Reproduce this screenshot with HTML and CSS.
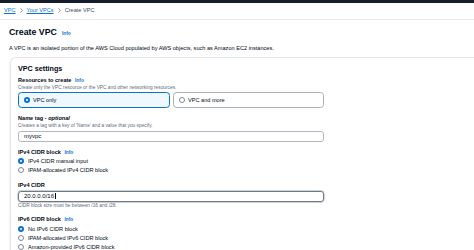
FILE: index.html
```html
<!DOCTYPE html>
<html lang="en">
<head>
<meta charset="utf-8">
<title>Create VPC</title>
<link rel="stylesheet" href="styles.css">
</head>
<body>
<div class="topnav"></div>
<nav class="crumbs">
  <a class="crumb-link" href="#">VPC</a>
  <svg class="chev" viewBox="0 0 3 5" width="3" height="5"><path d="M0.6 0.4 L2.4 2.5 L0.6 4.6" fill="none" stroke="#5f6b7a" stroke-width="0.7"/></svg>
  <a class="crumb-link" href="#">Your VPCs</a>
  <svg class="chev" viewBox="0 0 3 5" width="3" height="5"><path d="M0.6 0.4 L2.4 2.5 L0.6 4.6" fill="none" stroke="#5f6b7a" stroke-width="0.7"/></svg>
  <span class="crumb-current">Create VPC</span>
</nav>
<main class="page">
  <h1 class="title">Create VPC <a class="info" href="#">Info</a></h1>
  <p class="lead">A VPC is an isolated portion of the AWS Cloud populated by AWS objects, such as Amazon EC2 instances.</p>
  <section class="card">
    <h2 class="card-title">VPC settings</h2>

    <div class="field field-first">
      <div class="label">Resources to create <a class="info" href="#">Info</a></div>
      <div class="desc">Create only the VPC resource or the VPC and other networking resources.</div>
      <div class="tiles">
        <div class="tile tile-on"><span class="radio radio-on"></span>VPC only</div>
        <div class="tile"><span class="radio"></span>VPC and more</div>
      </div>
    </div>

    <div class="field">
      <div class="label">Name tag - <i>optional</i></div>
      <div class="desc">Creates a tag with a key of 'Name' and a value that you specify.</div>
      <div class="input">myvpc</div>
    </div>

    <div class="field">
      <div class="label">IPv4 CIDR block <a class="info" href="#">Info</a></div>
      <div class="radios">
        <div class="opt"><span class="radio radio-on"></span>IPv4 CIDR manual input</div>
        <div class="opt"><span class="radio"></span>IPAM-allocated IPv4 CIDR block</div>
      </div>
    </div>

    <div class="field">
      <div class="label">IPv4 CIDR</div>
      <div class="input input-focus">20.0.0.0/16<span class="caret"></span></div>
      <div class="hint">CIDR block size must be between /16 and /28.</div>
    </div>

    <div class="field">
      <div class="label">IPv6 CIDR block <a class="info" href="#">Info</a></div>
      <div class="radios">
        <div class="opt"><span class="radio radio-on"></span>No IPv6 CIDR block</div>
        <div class="opt"><span class="radio"></span>IPAM-allocated IPv6 CIDR block</div>
        <div class="opt"><span class="radio"></span>Amazon-provided IPv6 CIDR block</div>
      </div>
    </div>
  </section>
</main>
</body>
</html>
```

FILE: styles.css
```css
* {
  box-sizing: border-box;
  margin: 0;
  padding: 0;
}

html, body {
  width: 474px;
  height: 250px;
  overflow: hidden;
  background: #ffffff;
}

body {
  font-family: "Liberation Sans", Arial, sans-serif;
  color: #000716;
  font-size: 5.6px;
}

.topnav {
  height: 3px;
  background: #161d2a;
}

.crumbs {
  height: 17px;
  padding: 0 0 2px 4px;
  display: flex;
  align-items: center;
  border-bottom: 1px solid #e9ebed;
  font-size: 5.6px;
}

.crumb-link {
  color: #0972d3;
  text-decoration: underline;
  text-decoration-thickness: 0.5px;
  text-underline-offset: 1px;
}

.chev {
  margin: 0 4px 0 4px;
  display: block;
}

.crumb-current {
  color: #414d5c;
}

.page {
  padding-left: 9px;
}

.title {
  margin-top: 6px;
  font-size: 8.8px;
  line-height: 12px;
  font-weight: 700;
  display: flex;
  align-items: baseline;
  gap: 5px;
}

.info {
  font-size: 4.8px;
  font-weight: 700;
  color: #0972d3;
  text-decoration: none;
}

.label .info {
  margin-left: 2px;
}

.lead {
  margin-top: 4px;
  font-size: 5.6px;
  line-height: 8px;
}

.card {
  margin-top: 5px;
  margin-left: 1px;
  width: 464px;
  height: 195px;
  border: 1px solid #e4e6e9;
  border-right: none;
  border-bottom: none;
  border-radius: 6px 0 0 0;
  box-shadow: -1px 1px 2px rgba(0, 7, 22, 0.06);
  padding: 6px 0 0 7px;
}

.card-title {
  font-size: 7.2px;
  line-height: 9px;
  font-weight: 700;
}

.field {
  width: 306px;
  margin-top: 7px;
}

.field-first {
  margin-top: 3.5px;
}

.label {
  font-size: 5.6px;
  line-height: 7px;
  font-weight: 700;
}

.desc {
  margin-top: 1px;
  font-size: 4.8px;
  line-height: 6px;
  color: #5f6b7a;
}

.tiles {
  margin-top: 1.5px;
  display: grid;
  grid-template-columns: 152px 151px;
  gap: 3px;
}

.tile {
  height: 16px;
  display: flex;
  align-items: center;
  gap: 3px;
  padding-left: 5px;
  border: 1px solid #a9b0b8;
  border-radius: 3.5px;
  font-size: 5.6px;
}

.tile-on {
  border-color: #0972d3;
  background: #f0f8ff;
}

.radio {
  width: 6px;
  height: 6px;
  flex: none;
  border-radius: 50%;
  border: 0.8px solid #7d8998;
  background: #ffffff;
}

.radio-on {
  border: 2px solid #0972d3;
}

.input {
  margin-top: 1.5px;
  height: 11px;
  display: flex;
  align-items: center;
  padding-left: 5px;
  border: 1px solid #b3b8bf;
  border-radius: 3px;
  font-size: 6px;
}

.input-focus {
  margin-top: 2px;
  border-color: #6f7989;
  box-shadow: 0 0 0 0.4px #9aa4b2;
}

.caret {
  display: inline-block;
  width: 0.6px;
  height: 6px;
  margin-left: 1px;
  background: #000716;
}

.hint {
  margin-top: 1.5px;
  font-size: 4.8px;
  line-height: 6px;
  color: #5f6b7a;
}

.radios {
  margin-top: 1px;
}

.opt {
  height: 9px;
  display: flex;
  align-items: center;
  gap: 4px;
  font-size: 5.6px;
}
```
